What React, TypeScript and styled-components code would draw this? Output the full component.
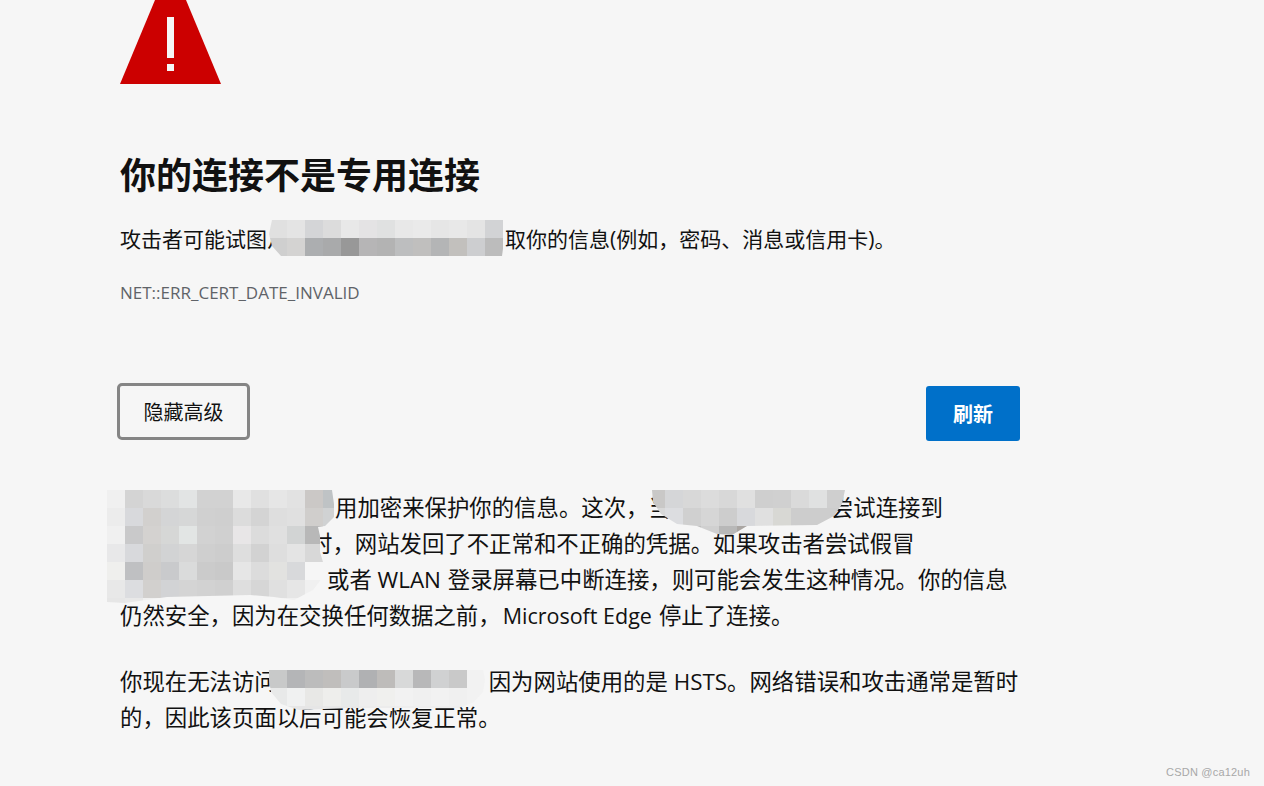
import styled, {createGlobalStyle} from "styled-components";

const GlobalStyle = createGlobalStyle`
  html, body {
    margin: 0;
    height: 100%;
    background: #f6f6f6;
  }
`;

const Page = styled.main`
  position: relative;
  box-sizing: border-box;
  width: 1264px;
  height: 786px;
  overflow: hidden;
  padding-left: 120px;
  background: #f6f6f6;
  color: #111;
  font-family: "Open Sans", "Noto Sans CJK SC", sans-serif;
  font-size: 22.4px;
`;

const Column = styled.div`
  width: 900px;
`;

const WarningIcon = styled.svg`
  display: block;
  width: 101px;
  height: 84px;
`;

const Heading = styled.h1`
  margin: 66px 0 0;
  font-size: 36px;
  line-height: 52px;
  font-weight: 700;
  color: #111;
`;

const Summary = styled.p`
  margin: 19px 0 0;
  font-size: 21px;
  line-height: 36px;
`;

const ErrorCode = styled.div`
  margin-top: 24px;
  font-size: 17px;
  line-height: 24px;
  color: #5f6368;
`;

const Actions = styled.div`
  display: flex;
  justify-content: space-between;
  align-items: flex-start;
  margin-top: 81px;
`;

const SecondaryButton = styled.button`
  box-sizing: border-box;
  width: 133px;
  height: 57px;
  margin: -3px 0 0 -3px;
  border: 3px solid #858585;
  border-radius: 5px;
  background: #f6f6f6;
  color: #111;
  font: inherit;
  font-size: 20px;
`;

const PrimaryButton = styled.button`
  width: 94px;
  height: 55px;
  padding-bottom: 2px;
  border: 0;
  border-radius: 3px;
  background: #0070c9;
  color: #fff;
  font: inherit;
  font-size: 20px;
  font-weight: 700;
`;

const Details = styled.div`
  margin-top: 49px;
`;

const Paragraph = styled.p`
  margin: 0 0 30px;
  line-height: 36px;
`;

const Line = styled.span`
  display: block;
  white-space: nowrap;
`;

const Latin = styled.span`
  font-size: 21.5px;
`;

const Blank = styled.span<{$w: number}>`
  display: inline-block;
  width: ${(p) => p.$w}px;
`;

const Grid = styled.div<{$x: number; $y: number; $clip: string}>`
  position: absolute;
  left: ${(p) => p.$x}px;
  top: ${(p) => p.$y}px;
  display: grid;
  grid-template-columns: repeat(13, 18px);
  grid-auto-rows: 18px;
  clip-path: ${(p) => p.$clip};
`;

const Cell = styled.i`
  display: block;
`;

const Watermark = styled.div`
  position: absolute;
  right: 14px;
  bottom: 7px;
  font-family: "Liberation Sans", Arial, sans-serif;
  font-size: 11px;
  line-height: 14px;
  letter-spacing: 0.2px;
  color: #a8a8a8;
`;

const Mosaic = ({x, y, clip, rows}: {x: number; y: number; clip: string; rows: string[]}) => (
  <Grid $x={x} $y={y} $clip={clip} aria-hidden>
    {rows.flatMap((row, r) =>
      row.split(" ").map((color, c) => <Cell key={`${r}-${c}`} style={{background: `#${color}`}} />)
    )}
  </Grid>
);

const summaryRows = [
  "e0e0e0 e4e4e4 d4d5d7 dcdcdc e8e8e8 e4e3e4 e0e1e1 e8e8e8 eaeaea e6e6e6 e8e8e8 e4e4e4 d2d3d5",
  "cfcfcf d4d3d2 acaeb0 a9aaab 989898 b6b5b6 b3b3b3 bdbebf c0bfbe b4b5b6 c2c0bd cdced0 bcbcbc",
];

const hostRows = [
  "f0f0f0 d4d4d4 d9d9d9 dcdddd e2e4e4 d2d2d2 d2d2d2 e8e8e8 e0e0e0 e6e6e6 e2e2e2 cbc8c6 bfc3c5",
  "ececec d8d9dc d2d0ce d4d5d6 d6d7d7 d0d0d0 cfcfcf dcdcdc d4d4d4 dedede e0e0e0 d0cecc d0d2d3",
  "f0f0f0 c9c9ca d4d2d0 d6d7d6 e2e5e4 d2d2d2 d0d0d0 e8e6e7 dcdcdc e0e0e0 d2d4d4 b8b8b8 d8d8d8",
  "e8e8e9 d8d9dc d0cfcd d2d3d4 d6d6d6 cfcfcf cdcdcd dedede d2d2d2 dedede e4e4e4 d8d8d8 d8d8d8",
  "efefed bfc0c2 cfcdcb c9cacc dadbdb cbcbcb c9c9c9 e6e6e6 dcdcdc e2e2e0 d8d9db f6f6f6 f6f6f6",
  "e8e8e8 dcdde0 d2d0ce d2d3d5 d4d4d4 d2d2d2 d0d0d0 dedede d6d6d6 e0e0e0 e6e6e6 f0f0f0 f0f0f0",
  "e6e6e6 e8e8e8 f0f0f0 f0f0f0 f0f0f0 f0f0f0 f0f0f0 f0f0f0 f0f0f0 f0f0f0 f0f0f0 f0f0f0 f0f0f0",
];

const browserRows = [
  "c9c8c7 d5d6d8 d8d8d8 dcdcdc d8d8d8 e0e0e0 cfcfcf d0d0d0 dadada e0e1e1 cfcfcf",
  "d8d8d8 dcdde0 d0d0d0 d6d6d6 cdcdcd d8d9dc e0e0e0 d8d8d4 cdcdcd cdcdcd cdcdcd",
  "d0d0d0 d0d0d0 bfbfbf d0d0d0 b8b8b8 aaa6a3 c5c5c5 c9cbce bfbfbf c0c0c0 c0c0c0",
].map((row) => row + " f6f6f6 f6f6f6");

const hstsRows = [
  "c8c9c9 b4b5b7 bcbcbc c0bebc c9cacb b0b1b3 bebcba d8d9d9 b8b8b9 d0d1d2 c9c9c9 f2f2f2 f2f2f2",
  "e8e9e9 f0f1f1 e8e8e6 eeeeec e8eaea eeeeee f0f0ee f2f2f2 f0f0f0 f2f2f2 f0f0f0 f2f2f2 f2f2f2",
  "e4e4e4 e6e6e6 e6e6e6 e8e8e8 e8e8e8 ececec ececec eeeeee eeeeee eeeeee eeeeee eeeeee eeeeee",
];

export default function App() {
  return (
    <Page>
      <GlobalStyle />
      <Column>
        <WarningIcon viewBox="0 0 101 84" aria-hidden>
          <path d="M0 84 L35 0 H66 L101 84 Z" fill="#cc0000" />
          <rect x="47" y="17" width="7" height="41" fill="#f6f6f6" />
          <rect x="47" y="64" width="7" height="7" fill="#f6f6f6" />
        </WarningIcon>
        <Heading>你的连接不是专用连接</Heading>
        <Summary>
          攻击者可能试图从<Blank $w={217} />取你的信息(例如，密码、消息或信用卡)。
        </Summary>
        <ErrorCode>NET::ERR_CERT_DATE_INVALID</ErrorCode>
        <Actions>
          <SecondaryButton>隐藏高级</SecondaryButton>
          <PrimaryButton>刷新</PrimaryButton>
        </Actions>
        <Details>
          <Paragraph>
            <Line>
              <Blank $w={215} />用加密来保护你的信息。这次，当<Blank $w={160} />尝试连接到
            </Line>
            <Line>
              <Blank $w={190} />时，网站发回了不正常和不正确的凭据。如果攻击者尝试假冒
            </Line>
            <Line>
              <Blank $w={207} />或者 WLAN <Blank $w={1} />登录屏幕已中断连接，则可能会发生这种情况。你的信息
            </Line>
            <Line>
              仍然安全，因为在交换任何数据之前，<Blank $w={2} />
              <Latin>Microsoft Edge</Latin>
              <Blank $w={7} />停止了连接。
            </Line>
          </Paragraph>
          <Paragraph>
            <Line>
              你现在无法访问<Blank $w={212} />因为网站使用的是 HSTS。网络错误和攻击通常是暂时
            </Line>
            <Line>的，因此该页面以后可能会恢复正常。</Line>
          </Paragraph>
        </Details>
      </Column>

      <Mosaic
        x={269}
        y={220}
        rows={summaryRows}
        clip="polygon(3px 0, 234px 0, 236px 14px, 233px 36px, 12px 36px, 3px 26px, 0 14px)"
      />
      <Mosaic
        x={107}
        y={490}
        rows={hostRows}
        clip="polygon(0 0, 225px 0, 227px 14px, 227px 27px, 218px 36px, 211px 37px, 213px 46px, 213px 62px, 216px 72px, 216px 87px, 206px 100px, 187px 110px, 167px 107px, 143px 105px, 60px 107px, 18px 113px, 0 112px)"
      />
      <Mosaic
        x={647}
        y={490}
        rows={browserRows}
        clip="polygon(5px 0, 198px 0, 195px 14px, 187px 26px, 170px 35px, 100px 36px, 85px 45px, 70px 44px, 50px 36px, 30px 34px, 14px 24px, 6px 12px)"
      />
      <Mosaic
        x={269}
        y={670}
        rows={hstsRows}
        clip="polygon(0 0, 214px 0, 216px 10px, 214px 22px, 205px 32px, 190px 38px, 80px 38px, 30px 40px, 12px 34px, 2px 22px, 0 10px)"
      />
      <Watermark>CSDN @ca12uh</Watermark>
    </Page>
  );
}
